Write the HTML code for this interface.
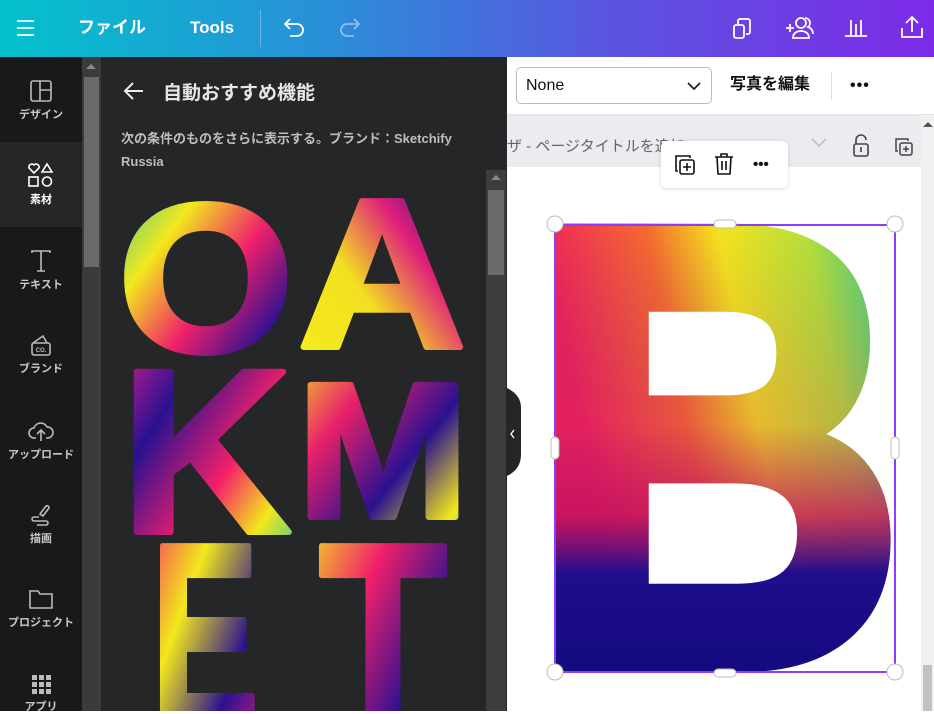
<!DOCTYPE html>
<html><head><meta charset="utf-8"><style>
*{margin:0;padding:0;box-sizing:border-box}
body{width:934px;height:711px;overflow:hidden;position:relative;font-family:"Liberation Sans","Noto Sans CJK JP",sans-serif;background:#fff}
.top{position:absolute;left:0;top:0;width:934px;height:57px;background:linear-gradient(90deg,#03c2cc 0%,#2a8fd8 35%,#5a55e0 65%,#7d2ae8 100%);color:#fff}
.top .t{position:absolute;top:18px;font-size:17px;font-weight:bold;line-height:20px}
.nav{position:absolute;left:0;top:57px;width:82px;height:654px;background:#18191b}
.nav .it{position:absolute;left:0;width:82px;text-align:center;color:#c9c9c9;font-size:11px;font-weight:bold}
.nav svg{display:block;margin:0 auto 3px}
.sb1{position:absolute;left:82px;top:57px;width:19px;height:654px;background:#3b3b3b}
.panel{position:absolute;left:101px;top:57px;width:406px;height:654px;background:#252627;color:#ddd;overflow:hidden}
.sb2{position:absolute;left:486px;top:170px;width:20px;height:541px;background:#3d3d3d}
.tb{position:absolute;left:507px;top:57px;width:427px;height:58px;background:#fff;border-bottom:1px solid #e3e3e3}
.hdr{position:absolute;left:507px;top:115px;width:414px;height:52px;background:#ebecf0}
.sb3{position:absolute;left:921px;top:115px;width:13px;height:596px;background:#f1f1f1}
</style></head><body>
<div class="top">
 <svg style="position:absolute;left:16px;top:19px" width="20" height="18"><path d="M1 2h17M1 9h17M1 16h17" stroke="#fff" stroke-width="1.8"/></svg>
 <div class="t" style="left:78px">ファイル</div>
 <div class="t" style="left:190px">Tools</div>
 <div style="position:absolute;left:260px;top:10px;width:1px;height:37px;background:rgba(255,255,255,.3)"></div>
 <svg style="position:absolute;left:282px;top:16px" width="26" height="22"><path d="M8 3L3 8l5 5M3 8h12a6 6 0 0 1 0 12H8" fill="none" stroke="#fff" stroke-width="1.8"/></svg>
 <svg style="position:absolute;left:336px;top:16px" width="26" height="22"><path d="M18 3l5 5-5 5M23 8H11a6 6 0 0 0 0 12h7" fill="none" stroke="rgba(255,255,255,.45)" stroke-width="1.8"/></svg>
 <svg style="position:absolute;left:732px;top:16px" width="22" height="24"><rect x="2" y="9" width="10" height="13" rx="2" fill="none" stroke="#fff" stroke-width="1.8"/><path d="M6 8V5a2 2 0 0 1 2-2h8a2 2 0 0 1 2 2v11a2 2 0 0 1-2 2h-2" fill="none" stroke="#fff" stroke-width="1.8"/></svg>
 <svg style="position:absolute;left:784px;top:14px" width="32" height="26"><path d="M2 14h8M6 10v8" stroke="#fff" stroke-width="1.8"/><circle cx="17" cy="9" r="5" fill="none" stroke="#fff" stroke-width="1.8"/><path d="M9 24c0-5 4-7 8-7s8 2 8 7zM21 4a5 5 0 0 1 3 9c3 1 5 3 5 7" fill="none" stroke="#fff" stroke-width="1.8"/></svg>
 <svg style="position:absolute;left:843px;top:16px" width="26" height="22"><path d="M2 20h22M8 4v16M13 8v12M18 4v16" stroke="#fff" stroke-width="1.8"/></svg>
 <svg style="position:absolute;left:900px;top:14px" width="24" height="26"><path d="M12 3v15M6 9l6-6 6 6M2 14v9h20v-9" fill="none" stroke="#fff" stroke-width="1.8"/></svg>
</div>

<div class="nav">
 <div class="it" style="top:22px"><svg width="24" height="24"><rect x="2" y="2" width="20" height="20" rx="2" fill="none" stroke="#bbb" stroke-width="1.6"/><path d="M11 2v20M11 11h11" stroke="#bbb" stroke-width="1.6"/></svg>デザイン</div>
 <div style="position:absolute;left:0;top:85px;width:82px;height:85px;background:#252627"></div>
 <div class="it" style="top:105px;color:#fff"><svg width="28" height="26"><path d="M7 11L2 6a3 3 0 0 1 5-3 3 3 0 0 1 5 3z" fill="none" stroke="#fff" stroke-width="1.6"/><path d="M20 2l5 8h-10z" fill="none" stroke="#fff" stroke-width="1.6"/><rect x="2" y="15" width="9" height="9" fill="none" stroke="#fff" stroke-width="1.6"/><circle cx="20" cy="19.5" r="4.5" fill="none" stroke="#fff" stroke-width="1.6"/></svg>素材</div>
 <div class="it" style="top:192px"><svg width="24" height="24"><path d="M3 4V2h18v2M12 2v20M8 22h8" fill="none" stroke="#bbb" stroke-width="1.6"/></svg>テキスト</div>
 <div class="it" style="top:276px"><svg width="24" height="24"><path d="M4 10l10-7 4 7" fill="none" stroke="#bbb" stroke-width="1.6"/><rect x="3" y="10" width="18" height="12" rx="2" fill="none" stroke="#bbb" stroke-width="1.6"/><text x="12" y="19" font-size="6" fill="#bbb" text-anchor="middle" font-family="Liberation Sans">CO.</text></svg>ブランド</div>
 <div class="it" style="top:362px"><svg width="26" height="24"><path d="M8 19H6a5 5 0 0 1 0-10 7 7 0 0 1 13-1 5 5 0 0 1 1 11h-2M13 22V12M9 15l4-4 4 4" fill="none" stroke="#bbb" stroke-width="1.6"/></svg>アップロード</div>
 <div class="it" style="top:446px"><svg width="24" height="24"><path d="M14 13l6-8a2 2 0 0 0-3-2l-6 8zM10 14H5a2 2 0 0 0 0 4h12a2 2 0 0 1 0 4H8" fill="none" stroke="#bbb" stroke-width="1.6"/></svg>描画</div>
 <div class="it" style="top:530px"><svg width="26" height="24"><path d="M2 4h8l2 3h12v14H2z" fill="none" stroke="#bbb" stroke-width="1.6"/></svg>プロジェクト</div>
 <div class="it" style="top:616px"><svg width="22" height="22"><g fill="#bbb"><rect x="2" y="2" width="5" height="5"/><rect x="9" y="2" width="5" height="5"/><rect x="16" y="2" width="5" height="5"/><rect x="2" y="9" width="5" height="5"/><rect x="9" y="9" width="5" height="5"/><rect x="16" y="9" width="5" height="5"/><rect x="2" y="16" width="5" height="5"/><rect x="9" y="16" width="5" height="5"/><rect x="16" y="16" width="5" height="5"/></g></svg>アプリ</div>
</div>
<div class="sb1"><div style="position:absolute;left:4px;top:7px;border:5px solid transparent;border-bottom:5px solid #888;border-top:0"></div><div style="position:absolute;left:2px;top:20px;width:15px;height:190px;background:#6a6a6a"></div></div>

<div class="panel">
 <svg style="position:absolute;left:22px;top:24px" width="22" height="20"><path d="M10 2L2 10l8 8M2 10h18" fill="none" stroke="#eee" stroke-width="2"/></svg>
 <div style="position:absolute;left:62px;top:21px;font-size:19px;font-weight:bold;color:#e6e6e6">自動おすすめ機能</div>
 <div style="position:absolute;left:20px;top:70px;width:370px;font-size:13px;font-weight:bold;color:#bdbdbd;line-height:23px">次の条件のものをさらに表示する。ブランド：Sketchify Russia</div>
 <svg style="position:absolute;left:0;top:0" width="406" height="654">
  <defs>
   <linearGradient id="gO" x1="0" y1="0" x2="1" y2="1"><stop offset="0" stop-color="#13c2b0"/><stop offset=".3" stop-color="#f3e81c"/><stop offset=".55" stop-color="#f0206a"/><stop offset=".8" stop-color="#2a1190"/></linearGradient>
   <linearGradient id="gA" x1="0" y1="1" x2="1" y2="0"><stop offset="0" stop-color="#f6ef1a"/><stop offset=".4" stop-color="#f2e020"/><stop offset=".65" stop-color="#e0207a"/><stop offset=".9" stop-color="#24118c"/></linearGradient>
   <linearGradient id="gK" x1="0" y1="0" x2="1" y2="1"><stop offset="0" stop-color="#f0208a"/><stop offset=".3" stop-color="#2a1190"/><stop offset=".6" stop-color="#f5206a"/><stop offset=".8" stop-color="#f3e81c"/><stop offset="1" stop-color="#1ac0b0"/></linearGradient>
   <linearGradient id="gM" x1="0" y1="0" x2="1" y2="1"><stop offset="0" stop-color="#f3e81c"/><stop offset=".3" stop-color="#e8206a"/><stop offset=".6" stop-color="#2a1190"/><stop offset=".85" stop-color="#f3e81c"/><stop offset="1" stop-color="#13c2b0"/></linearGradient>
   <linearGradient id="gE" x1="0" y1="0" x2="1" y2="1"><stop offset="0" stop-color="#f3206a"/><stop offset=".35" stop-color="#f3e81c"/><stop offset=".7" stop-color="#2a1190"/><stop offset="1" stop-color="#e0207a"/></linearGradient>
   <linearGradient id="gT" x1="0" y1="0" x2="1" y2="1"><stop offset="0" stop-color="#f3e81c"/><stop offset=".35" stop-color="#f0206a"/><stop offset=".7" stop-color="#2a1190"/></linearGradient>
  </defs>
  <g font-family="Liberation Sans" font-weight="bold" stroke-width="6" stroke-linejoin="round">
   <text transform="translate(17,294) scale(1.05,0.98)" font-size="215" fill="url(#gO)" stroke="url(#gO)">O</text>
   <text x="197" y="290" font-size="212" fill="url(#gA)" stroke="url(#gA)" textLength="168" lengthAdjust="spacingAndGlyphs">A</text>
   <text x="20" y="475" font-size="233" fill="url(#gK)" stroke="url(#gK)" textLength="170" lengthAdjust="spacingAndGlyphs">K</text>
   <text x="196" y="460" font-size="192" fill="url(#gM)" stroke="url(#gM)" textLength="172" lengthAdjust="spacingAndGlyphs">M</text>
   <text x="50" y="668" font-size="260" fill="url(#gE)" stroke="url(#gE)" textLength="108" lengthAdjust="spacingAndGlyphs">E</text>
   <text x="218" y="668" font-size="260" fill="url(#gT)" stroke="url(#gT)" textLength="128" lengthAdjust="spacingAndGlyphs">T</text>
  </g>
 </svg>
</div>
<div class="sb2"><div style="position:absolute;left:5px;top:5px;border:5px solid transparent;border-bottom:5px solid #888;border-top:0"></div><div style="position:absolute;left:2px;top:20px;width:16px;height:85px;background:#6a6a6a"></div></div>

<div class="tb">
 <div style="position:absolute;left:9px;top:10px;width:196px;height:37px;border:1px solid #bbb;border-radius:5px;font-size:16px;color:#111;padding:9px 9px">None
  <svg style="position:absolute;right:10px;top:14px" width="14" height="9"><path d="M1 1l6 6 6-6" fill="none" stroke="#222" stroke-width="1.8"/></svg></div>
 <div style="position:absolute;left:223px;top:18px;font-size:16px;font-weight:bold;color:#111;line-height:20px">写真を編集</div>
 <div style="position:absolute;left:324px;top:15px;width:1px;height:28px;background:#ddd"></div>
 <div style="position:absolute;left:343px;top:20px;font-size:16px;font-weight:bold;letter-spacing:1px;color:#111">•••</div>
</div>
<div class="hdr">
 <div style="position:absolute;left:0;top:20px;font-size:15px;color:#666;white-space:nowrap">ザ - ページタイトルを追加</div>
 <svg style="position:absolute;left:304px;top:23px" width="16" height="10"><path d="M1 1l7 7 7-7" fill="none" stroke="#bbb" stroke-width="1.5"/></svg>
 <svg style="position:absolute;left:345px;top:19px" width="18" height="24"><path d="M4 10V6a5 5 0 0 1 10 0" fill="none" stroke="#444" stroke-width="1.6"/><rect x="2" y="10" width="14" height="12" rx="2" fill="none" stroke="#444" stroke-width="1.6"/><path d="M9 13v5" stroke="#444" stroke-width="1.6"/></svg>
 <svg style="position:absolute;left:387px;top:22px" width="20" height="20"><path d="M4 14H2V2h12v2" fill="none" stroke="#444" stroke-width="1.5"/><rect x="6" y="6" width="12" height="12" rx="2" fill="none" stroke="#444" stroke-width="1.5"/><path d="M12 9v6M9 12h6" stroke="#444" stroke-width="1.5"/></svg>
</div>
<div class="sb3"><div style="position:absolute;left:2px;top:7px;border:5px solid transparent;border-bottom:5px solid #555;border-top:0"></div><div style="position:absolute;left:2px;top:550px;width:9px;height:46px;background:#c1c1c1"></div></div>

<div style="position:absolute;left:661px;top:141px;width:127px;height:47px;background:#fff;border-radius:6px;box-shadow:0 1px 4px rgba(0,0,0,.15);z-index:2">
 <svg style="position:absolute;left:12px;top:12px" width="24" height="24"><path d="M5 18H3V3h14v2" fill="none" stroke="#111" stroke-width="1.6"/><rect x="7" y="7" width="14" height="14" rx="2" fill="none" stroke="#111" stroke-width="1.6"/><path d="M14 10v8M10 14h8" stroke="#111" stroke-width="1.6"/></svg>
 <svg style="position:absolute;left:52px;top:11px" width="22" height="24"><path d="M2 5h18M8 5V2h6v3M4 5l1 17h12l1-17M9 9v9M13 9v9" fill="none" stroke="#111" stroke-width="1.6"/></svg>
 <div style="position:absolute;left:92px;top:15px;font-size:15px;font-weight:bold;color:#111">•••</div>
</div>

<svg style="position:absolute;left:0;top:0" width="934" height="711">
 <defs>
  <linearGradient id="gB1" gradientUnits="userSpaceOnUse" x1="555" y1="300" x2="895" y2="230"><stop offset="0" stop-color="#f0245a"/><stop offset=".3" stop-color="#f56a30"/><stop offset=".5" stop-color="#f6e41c"/><stop offset=".75" stop-color="#b6e03a"/><stop offset="1" stop-color="#22cc9c"/></linearGradient>
  <linearGradient id="gB2" gradientUnits="userSpaceOnUse" x1="0" y1="225" x2="0" y2="672"><stop offset="0" stop-color="#1a0c88" stop-opacity="0"/><stop offset=".45" stop-color="#b01070" stop-opacity=".2"/><stop offset=".65" stop-color="#c01060" stop-opacity=".8"/><stop offset=".78" stop-color="#1e0e8c" stop-opacity="1"/><stop offset="1" stop-color="#150a80"/></linearGradient>
  <mask id="mB" maskUnits="userSpaceOnUse" x="0" y="0" width="934" height="711">
   <text x="530" y="661" font-family="Liberation Sans" font-weight="bold" font-size="620" fill="#fff" stroke="#fff" stroke-width="22" stroke-linejoin="round" textLength="375" lengthAdjust="spacingAndGlyphs">B</text>
  </mask>
 </defs>
 <g mask="url(#mB)">
  <rect x="540" y="210" width="370" height="475" fill="url(#gB1)"/>
  <rect x="540" y="210" width="370" height="475" fill="url(#gB2)"/>
 </g>
 <path d="M507 388c8 4 14 10 14 20v46c0 12-6 18-14 22z" fill="#252627"/>
 <path d="M514 430l-3 4 3 4" fill="none" stroke="#fff" stroke-width="1.4"/>
 <rect x="555" y="225" width="340" height="447" fill="none" stroke="#8b3dff" stroke-width="2"/>
 <g fill="#fff" stroke="#bbb" stroke-width="1">
  <circle cx="555" cy="224" r="8"/><circle cx="895" cy="224" r="8"/><circle cx="555" cy="672" r="8"/><circle cx="895" cy="672" r="8"/>
  <rect x="714" y="220" width="22" height="8" rx="4"/><rect x="714" y="669" width="22" height="8" rx="4"/>
  <rect x="551" y="437" width="8" height="22" rx="4"/><rect x="891" y="437" width="8" height="22" rx="4"/>
 </g>
</svg>
</body></html>
